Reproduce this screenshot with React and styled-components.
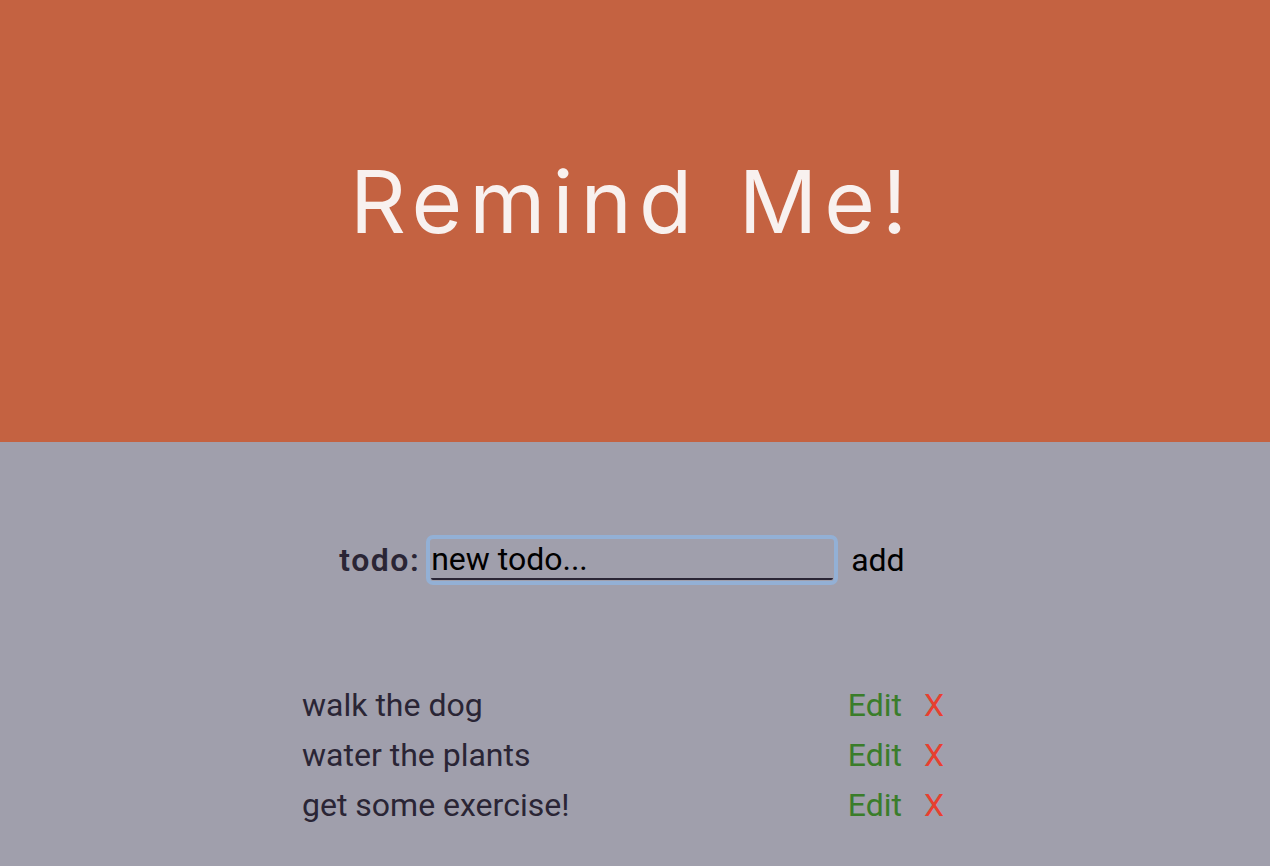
import styled, { createGlobalStyle } from "styled-components";

const Global = createGlobalStyle`
    html, body {
        margin: 0;
        padding: 0;
        background: #A09FAC;
    }
    body {
        font-family: Roboto, "Liberation Sans", sans-serif;
    }
`

const todos = ["walk the dog", "water the plants", "get some exercise!"]

export default function App() {
    return (
        <Page>
            <Global />
            <Header>
                <Title>Remind Me!</Title>
            </Header>
            <Main>
                <Form onSubmit={(e) => e.preventDefault()}>
                    <Label htmlFor="todo">todo:</Label>
                    <Field id="todo" type="text" defaultValue="new todo..." />
                    <AddButton type="submit">add</AddButton>
                </Form>
                <List>
                    {todos.map((t) => (
                        <Item key={t}>
                            <Text>{t}</Text>
                            <Action color="#3A7D2A">Edit</Action>
                            <Action color="#E8402F" gap={22}>X</Action>
                        </Item>
                    ))}
                </List>
            </Main>
        </Page>
    )
}

const Page = styled.div`
    min-height: 866px;
    background: #A09FAC;
`

const Header = styled.header`
    height: 442px;
    background: #C46241;
    display: flex;
    justify-content: center;
    align-items: center;
    padding: 0 6px 40px 0;
    box-sizing: border-box;
`

const Title = styled.h1`
    margin: 0;
    font-family: Inter, "Open Sans", sans-serif;
    font-weight: 400;
    font-size: 87px;
    letter-spacing: 7px;
    word-spacing: 8px;
    color: #F8F1EF;
`

const Main = styled.main`
    padding-top: 98px;
`

const Form = styled.form`
    display: flex;
    justify-content: center;
    align-items: center;
    padding-right: 26px;
`

const Label = styled.label`
    font-size: 32px;
    font-weight: 600;
    letter-spacing: 1.5px;
    color: #2A2535;
    margin-right: 11px;
`

const Field = styled.input`
    width: 402px;
    height: 40px;
    box-sizing: border-box;
    padding: 0;
    font-family: Roboto, "Liberation Sans", sans-serif;
    font-size: 32px;
    color: #000;
    background: transparent;
    border: none;
    border-bottom: 2px solid #2A2535;
    border-radius: 2px;
    outline: 4px solid #93B0D5;
    outline-offset: 1px;
`

const AddButton = styled.button`
    margin-left: 18px;
    background: none;
    border: none;
    padding: 0;
    font-family: Roboto, "Liberation Sans", sans-serif;
    font-size: 32px;
    color: #000;
    cursor: pointer;
`

const List = styled.ul`
    list-style: none;
    margin: 100px auto 0;
    padding: 0;
    width: 642px;
    transform: translateX(-12px);
`

const Item = styled.li`
    display: flex;
    align-items: center;
    height: 50px;
    font-size: 32px;
`

const Text = styled.span`
    flex: 1;
    color: #2A2535;
`

const Action = styled.span`
    color: ${(p) => p.color};
    margin-left: ${(p) => p.gap || 20}px;
    cursor: pointer;
`
